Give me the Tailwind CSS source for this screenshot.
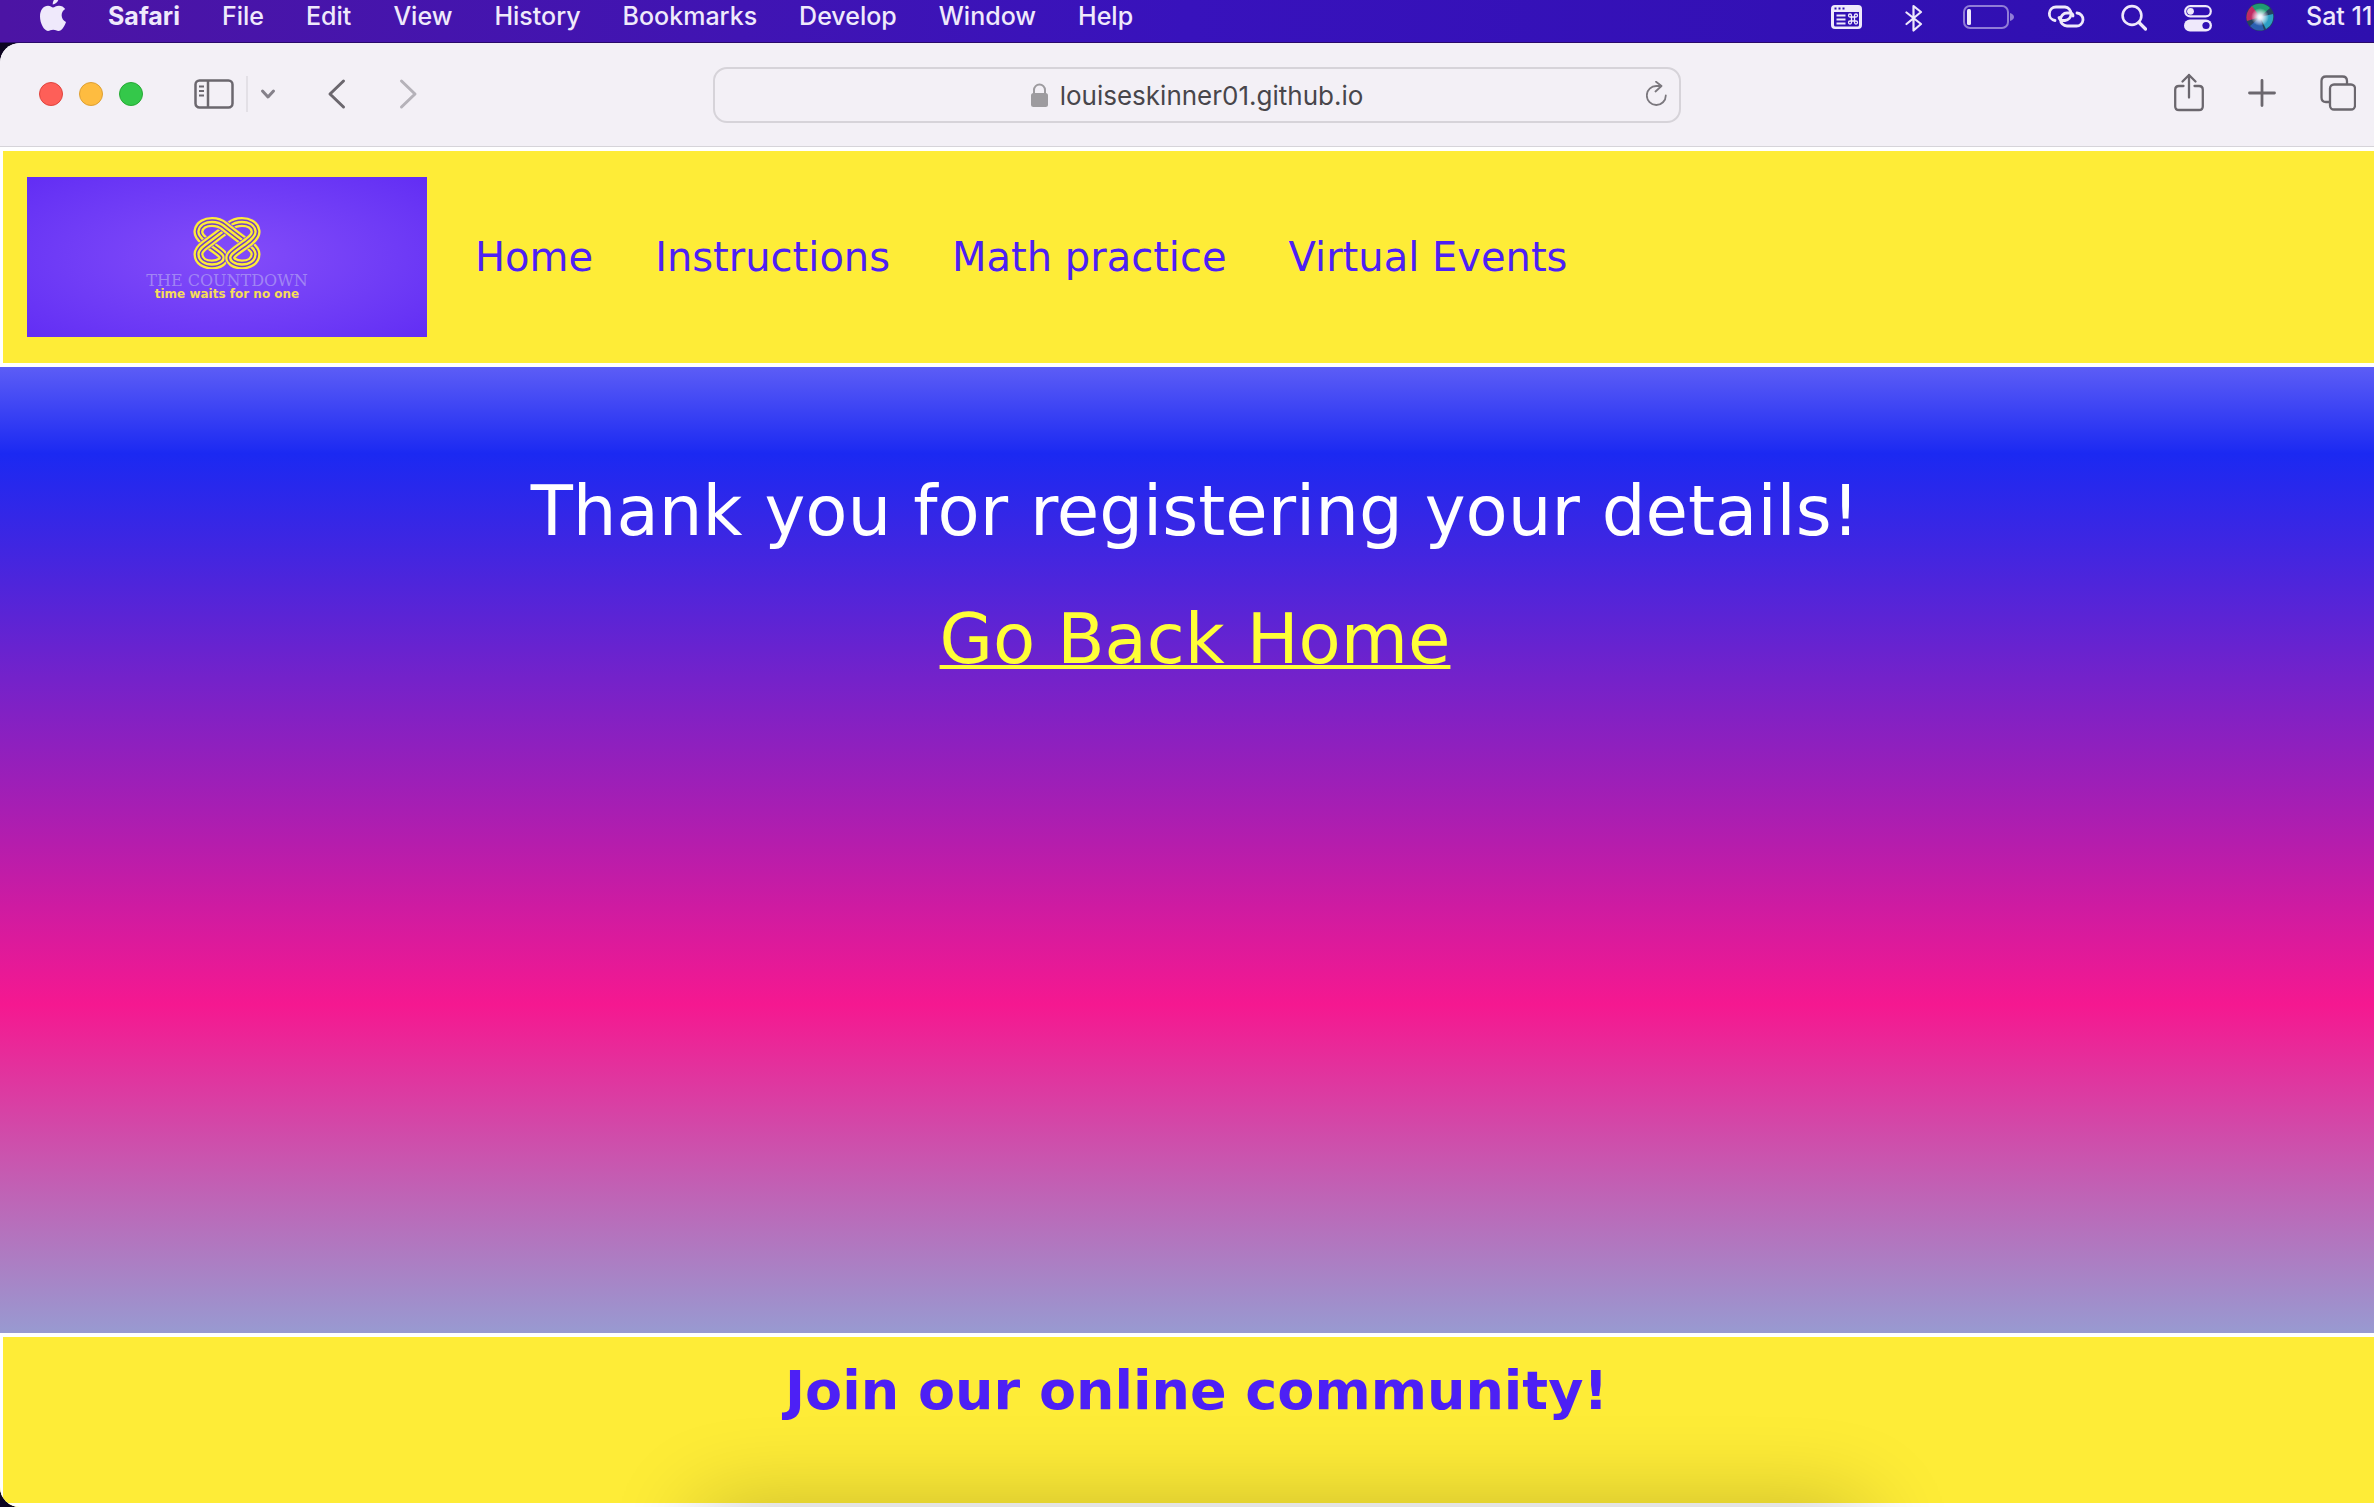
<!DOCTYPE html>
<html lang="en">
<head>
<meta charset="utf-8">
<meta name="viewport" content="width=device-width, initial-scale=1">
<title>The Countdown</title>
<script src="https://cdn.jsdelivr.net/npm/@tailwindcss/browser@4"></script>
</head>
<body class="relative flex min-h-screen flex-col overflow-x-hidden bg-[#0c0420] font-['Inter',sans-serif]">

<!-- macOS menu bar -->
<header class="flex h-[43px] items-start justify-between border-b border-[#2a0a6a] bg-linear-to-r from-[#4c14a4] via-[#3812bc] to-[#2e0fae] text-[25px] leading-8 font-medium whitespace-nowrap text-[#efe9fb]">
  <nav aria-label="Menu bar" class="flex items-start gap-[42px] pl-10">
    <svg class="h-9 w-[26px]" viewBox="0 0 26 36" fill="currentColor" aria-label="Apple"><path d="M13 10.500c1.500 0 3-1.700 6-1.700 2.500 0 4.800 1.200 6.200 3.300-5.300 3.200-4.400 10.800.8 12.800-1.200 3.600-4.200 9.100-7.500 9.100-2 0-3-1.200-5.300-1.200S9.800 34 7.900 34C4.200 34 0 26.500 0 19.600 0 12.600 3.800 8.800 8 8.800c2.200 0 3.900 1.700 5 1.700zM12.700 7.500C12.500 3.500 15.500 0 19 -1c.4 4.200-2.600 8.200-6.300 8.500z" transform="translate(0 -3)"/></svg>
    <span class="font-bold">Safari</span><span>File</span><span>Edit</span><span>View</span><span>History</span><span>Bookmarks</span><span>Develop</span><span>Window</span><span>Help</span>
  </nav>
  <div class="flex items-start">
    <svg class="mr-[43px] h-9 w-[31px]" viewBox="0 0 31 36" aria-label="Keyboard viewer"><path fill="currentColor" fill-rule="evenodd" d="M4 5h23a4 4 0 0 1 4 4v16a4 4 0 0 1-4 4H4a4 4 0 0 1-4-4V9a4 4 0 0 1 4-4zM3 12v13q0 1.500 1.500 1.500h22q1.500 0 1.500-1.500V12z"/><path d="M3.500 8.500h2m2 0h2m2 0h2" stroke="#3010b4" stroke-width="2"/><path d="M5.500 15.500h9m-9 4h9m-9 4h9" stroke="currentColor" stroke-width="2"/><path d="M20.500 15.500v7a1.500 1.500 0 1 1-1.500-1.500h6a1.500 1.500 0 1 1-1.500 1.500v-7a1.500 1.500 0 1 1 1.500 1.500h-6a1.500 1.500 0 1 1 1.500-1.500z" fill="none" stroke="currentColor" stroke-width="1.300"/></svg>
    <svg class="mr-10 h-9 w-[18px]" viewBox="0 0 18 36" fill="none" stroke="currentColor" stroke-width="2.200" stroke-linejoin="round" stroke-linecap="round" aria-label="Bluetooth"><path d="M1.500 12.500 16 24l-7.500 6.500V6L16 12 1.500 24"/></svg>
    <svg class="mr-8 h-9 w-[52px]" viewBox="0 0 52 36" aria-label="Battery"><rect x="1" y="6" width="44" height="22" rx="6" fill="none" stroke="currentColor" stroke-opacity=".5" stroke-width="2"/><rect x="4" y="9" width="4" height="16" rx="1.500" fill="currentColor"/><path d="M47 13q4 1.500 4 4t-4 4z" fill="currentColor" fill-opacity=".5"/></svg>
    <svg class="mr-9 h-9 w-[38px]" viewBox="0 0 38 36" fill="none" stroke="currentColor" stroke-width="2.800" stroke-linecap="round" aria-label="Hotspot"><path d="M8 20.500a6.800 6.800 0 0 1 1-13.500h9a6.800 6.800 0 0 1 0 13.500h-2.500q-3-.5-3.500-3"/><path d="M30 13a6.500 6.500 0 0 1-1 13h-9a6.500 6.500 0 0 1 0-13h3q3 .5 3 3"/></svg>
    <svg class="mr-[37px] h-9 w-[26px]" viewBox="0 0 26 36" fill="none" stroke="currentColor" stroke-width="2.600" stroke-linecap="round" aria-label="Search"><circle cx="11" cy="15.500" r="9.400"/><path d="m18 22.500 6.500 6.500" stroke-width="3.200"/></svg>
    <svg class="mr-[34px] h-9 w-[28px]" viewBox="0 0 28 36" aria-label="Control Centre"><rect x="1.200" y="6.200" width="25.600" height="10.200" rx="5.100" fill="none" stroke="currentColor" stroke-width="2.200"/><circle cx="6.500" cy="11.300" r="3.400" fill="currentColor"/><rect y="19.500" width="28" height="12" rx="6" fill="currentColor"/><circle cx="22" cy="25.500" r="3.600" fill="#3010b4"/></svg>
    <svg class="mr-8 h-9 w-[28px]" viewBox="0 0 28 36" aria-label="Siri"><defs><radialGradient id="siri"><stop offset="0" stop-color="#fff"/><stop offset=".25" stop-color="#e8eef8"/><stop offset="1" stop-color="#fff" stop-opacity="0"/></radialGradient></defs><circle cx="14" cy="17" r="14" fill="#25435f"/><path d="M14 17 5 7a14 14 0 0 1 19 1z" fill="#1f9a72"/><path d="M14 17 1 21A14 14 0 0 1 6 6z" fill="#c02b63"/><path d="M14 17l13-3a14 14 0 0 1-7 15z" fill="#2c9fc4"/><path d="M14 17l4 13A14 14 0 0 1 4 26z" fill="#2b5fb0"/><circle cx="14" cy="17" r="9" fill="url(#siri)"/></svg>
    <span class="w-[68px] overflow-hidden">Sat 11</span>
  </div>
</header>

<!-- Safari window -->
<div class="flex grow flex-col overflow-hidden rounded-l-[20px] bg-white">
  <div class="grid h-[104px] grid-cols-[713fr_968fr_693fr] items-center border-b border-[#d6d4d9] bg-[#f3f0f6] text-[#6b676e]">
    <div class="flex items-center pb-0.5 pl-[39px]">
      <div class="flex gap-4">
        <button aria-label="Close" class="size-6 rounded-full border border-[#e0443e] bg-[#fe5f58]"></button>
        <button aria-label="Minimise" class="size-6 rounded-full border border-[#dea034] bg-[#febc40]"></button>
        <button aria-label="Zoom" class="size-6 rounded-full border border-[#27aa35] bg-[#34c84a]"></button>
      </div>
      <button aria-label="Sidebar" class="ml-[51px]"><svg class="h-8 w-10" viewBox="0 0 40 32" fill="none" stroke="currentColor" stroke-width="2.500"><rect x="1.500" y="2.500" width="37" height="27" rx="4"/><path d="M14 3v26"/><path d="M5 8.500h5m-5 4.500h5m-5 4.500h5" stroke-width="2"/></svg></button>
      <span class="ml-3 h-9 w-0.5 bg-[#e3e0e6]"></span>
      <button aria-label="Sidebar menu" class="ml-3"><svg class="h-4 w-4" viewBox="0 0 16 16" fill="none" stroke="#85818a" stroke-width="3" stroke-linecap="round" stroke-linejoin="round"><path d="m2.500 5 5.500 6 5.500-6"/></svg></button>
      <button aria-label="Back" class="ml-[51px]"><svg class="h-8 w-5" viewBox="0 0 20 32" fill="none" stroke="currentColor" stroke-width="3" stroke-linecap="round" stroke-linejoin="round"><path d="M16.500 3 3 16l13.500 13"/></svg></button>
      <button aria-label="Forward" class="ml-[51px] text-[#b5b2b9]"><svg class="h-8 w-5" viewBox="0 0 20 32" fill="none" stroke="currentColor" stroke-width="3" stroke-linecap="round" stroke-linejoin="round"><path d="m3.500 3 13.500 13L3.500 29"/></svg></button>
    </div>
    <div class="relative flex h-14 items-center justify-center gap-3 rounded-[14px] border-2 border-[#d6d3d9]">
      <svg class="h-6 w-[17px]" viewBox="0 0 17 24" aria-hidden="true"><rect y="10" width="17" height="14" rx="2.500" fill="#9d9b9f"/><path d="M3 11V7a5.500 5.500 0 0 1 11 0v4" fill="none" stroke="#9d9b9f" stroke-width="2"/></svg>
      <span class="pt-0.5 text-[26px] leading-8 text-[#48464b]">louiseskinner01.github.io</span>
      <button aria-label="Reload" class="absolute right-3"><svg class="h-7 w-[21px]" viewBox="0 0 21 28" fill="none" stroke="#7b787e" stroke-width="1.800" stroke-linecap="round" stroke-linejoin="round"><path d="M19.800 14.500a9.500 9.500 0 1 1-9.300-9.500H15M10 .8 15.500 5 9.500 10.500"/></svg></button>
    </div>
    <div class="flex items-center justify-end pr-[18px] pb-1">
      <button aria-label="Share"><svg class="h-10 w-[30px]" viewBox="0 0 30 40" fill="none" stroke="currentColor" stroke-width="2.300" stroke-linecap="round" stroke-linejoin="round"><path d="M9.500 13H5q-3.800 0-3.800 3.800v16.400Q1.200 37 5 37h20q3.800 0 3.800-3.800V16.800Q28.800 13 25 13h-4.500M15 24.500V2M8.500 8.500 15 2l6.500 6.500"/></svg></button>
      <button aria-label="New tab" class="ml-11"><svg class="h-7 w-7" viewBox="0 0 28 28" fill="none" stroke="currentColor" stroke-width="2.800" stroke-linecap="round"><path d="M14 1.500v25M1.500 14h25"/></svg></button>
      <button aria-label="Tab overview" class="ml-11"><svg class="h-9 w-9" viewBox="0 0 36 36" fill="none" stroke="currentColor" stroke-width="2.300"><rect x="10" y="9.500" width="25" height="25" rx="4"/><path d="M10 27H6q-4.500 0-4.500-4.500V6Q1.500 1.500 6 1.500h16.500Q27 1.500 27 6v3.500"/></svg></button>
    </div>
  </div>

  <!-- Site header -->
  <div class="flex items-center gap-12 border-4 border-r-0 border-l-[3px] border-white bg-[#feec37] px-6 py-[26px]">
    <a href="#" aria-label="The Countdown home" class="flex h-40 w-[400px] shrink-0 flex-col items-center bg-radial from-[#844cf9] to-[#622df4] pt-10 whitespace-nowrap">
      <svg class="h-[52px] w-[68px]" viewBox="166 40 68 52" fill="none" aria-hidden="true">
        <defs>
          <path id="nw" d="M185 87.500C192 87.500 199 83.500 196 78.500C194 75 182 68 177 63.500C173.500 60.500 171 57 171.500 54C172.500 47.500 179 45 185 45"/>
          <path id="sw" d="M215 45C210 45 206 46.500 203 49C195 55.500 186 62 178 68C174 71 171.500 74 171.500 77C171.500 84 178 87.500 185 87.500"/>
          <path id="se" d="M185 45C190 45 194 46.500 197 49C205 55.500 214 62 222 68C226 71 228.500 74 228.500 77C228.500 84 222 87.500 215 87.500"/>
          <path id="ne" d="M215 87.500C208 87.500 201 83.500 204 78.500C206 75 218 68 223 63.500C226.500 60.500 229 57 228.500 54C227.500 47.500 221 45 215 45"/>
        </defs>
        <g stroke="#7f49f9" stroke-width="11.500"><use href="#nw"/></g><g stroke="#feec37" stroke-width="10"><use href="#nw"/></g><g stroke="#7040c8" stroke-width="5.400"><use href="#nw"/></g><g stroke="#feec37" stroke-width="2.400"><use href="#nw"/></g>
        <g stroke="#7f49f9" stroke-width="11.500"><use href="#sw"/></g><g stroke="#feec37" stroke-width="10"><use href="#sw"/></g><g stroke="#7040c8" stroke-width="5.400"><use href="#sw"/></g><g stroke="#feec37" stroke-width="2.400"><use href="#sw"/></g>
        <g stroke="#7f49f9" stroke-width="11.500"><use href="#se"/></g><g stroke="#feec37" stroke-width="10"><use href="#se"/></g><g stroke="#7040c8" stroke-width="5.400"><use href="#se"/></g><g stroke="#feec37" stroke-width="2.400"><use href="#se"/></g>
        <g stroke="#7f49f9" stroke-width="11.500"><use href="#ne"/></g><g stroke="#feec37" stroke-width="10"><use href="#ne"/></g><g stroke="#7040c8" stroke-width="5.400"><use href="#ne"/></g><g stroke="#feec37" stroke-width="2.400"><use href="#ne"/></g>
      </svg>
      <span class="mt-1 font-['DejaVu_Serif',serif] text-[16px] leading-4 text-[#a184f4]">THE COUNTDOWN</span>
      <span class="font-['DejaVu_Sans',sans-serif] text-[12px] leading-[10px] font-bold text-[#f5dc58]">time waits for no one</span>
    </a>
    <nav aria-label="Main" class="flex gap-[62px] font-['DejaVu_Sans',sans-serif] text-[40px] leading-[48px] whitespace-nowrap text-[#4d20f5]">
      <a href="#">Home</a><a href="#">Instructions</a><a href="#">Math practice</a><a href="#">Virtual Events</a>
    </nav>
  </div>

  <!-- Confirmation -->
  <main class="flex grow flex-col items-center gap-12 bg-[linear-gradient(to_bottom,#5c5df6_0%,#1b29f2_9%,#f51890_66%,#989ad1_100%)] pt-[104px] pl-4 font-['DejaVu_Sans',sans-serif] text-[69px] leading-[80px]">
    <h1 class="text-white">Thank you for registering your details!</h1>
    <a href="#" class="text-[#ffff37] underline decoration-4 underline-offset-2">Go Back Home</a>
  </main>

  <footer class="border-4 border-r-0 border-l-[3px] border-white bg-[#feec37] pt-[22px] pb-20 pl-4">
    <h2 class="text-center font-['DejaVu_Sans',sans-serif] text-[54px] leading-[64px] font-bold text-[#4d20f5]">Join our online community!</h2>
  </footer>
</div>

<!-- Shadow cast by the Dock below the window -->
<div class="pointer-events-none absolute inset-x-0 bottom-0 h-40 overflow-hidden">
  <div class="absolute top-full right-[21.500%] left-[29.500%] h-20 shadow-[0_0_90px_rgba(0,0,0,0.24)]"></div>
</div>
</body>
</html>
